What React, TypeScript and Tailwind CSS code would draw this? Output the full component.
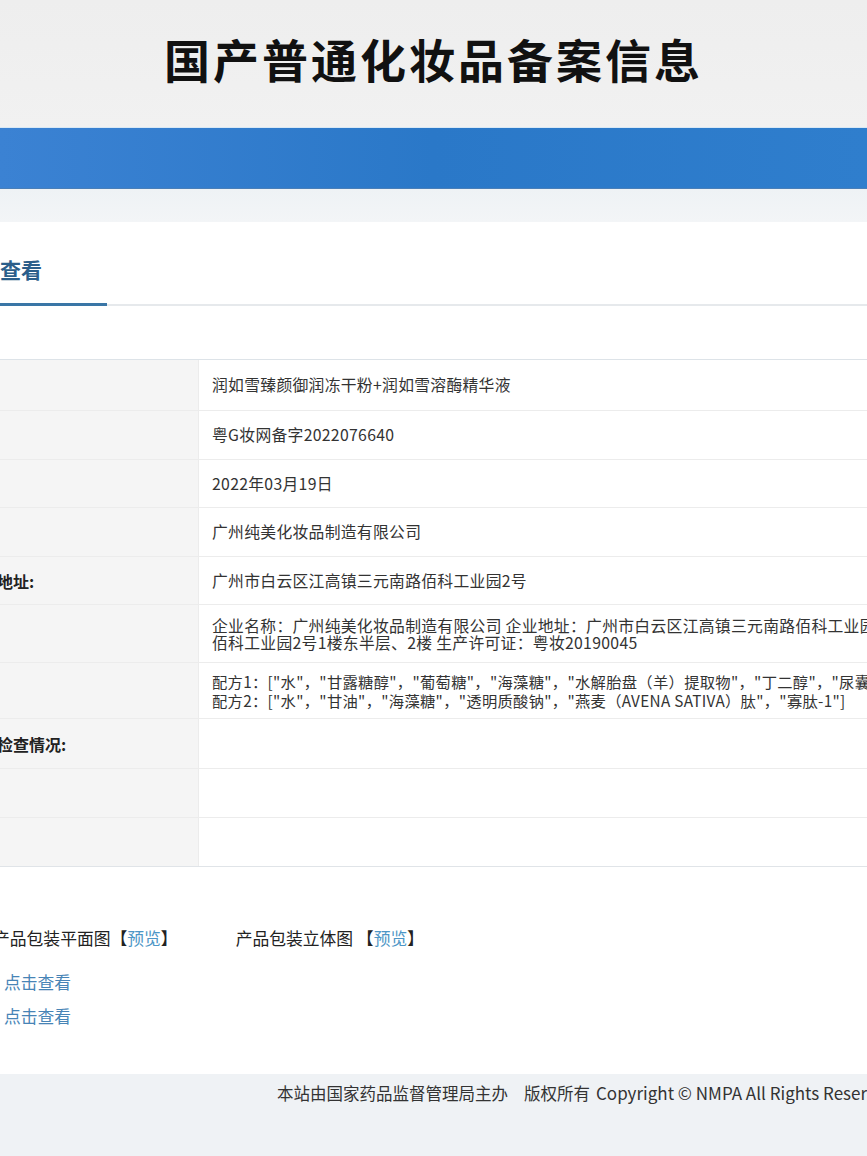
import React from 'react'

// 国产普通化妆品备案信息 详情页
const rows: { label: string; value: React.ReactNode; h: string }[] = [
  { label: '产品名称:', value: '润如雪臻颜御润冻干粉+润如雪溶酶精华液', h: 'h-[51px]' },
  { label: '备案编号:', value: '粤G妆网备字2022076640', h: 'h-[49px]' },
  { label: '备案日期:', value: '2022年03月19日', h: 'h-[48px]' },
  { label: '备案人:', value: '广州纯美化妆品制造有限公司', h: 'h-[49px]' },
  { label: '生产企业（备案人）地址:', value: '广州市白云区江高镇三元南路佰科工业园2号', h: 'h-[48px]' },
  {
    label: '生产企业信息:',
    value: (
      <div className="leading-[17px]">
        <div>企业名称：广州纯美化妆品制造有限公司 企业地址：广州市白云区江高镇三元南路佰科工业园</div>
        <div>佰科工业园2号1楼东半层、2楼 生产许可证：粤妆20190045</div>
      </div>
    ),
    h: 'h-[58px]',
  },
  {
    label: '产品配方成分:',
    value: (
      <div className="leading-[19px] text-[15.3px]">
        <div>配方1：["水"，"甘露糖醇"，"葡萄糖"，"海藻糖"，"水解胎盘（羊）提取物"，"丁二醇"，"尿囊素"]</div>
        <div>配方2：["水"，"甘油"，"海藻糖"，"透明质酸钠"，"燕麦（AVENA SATIVA）肽"，"寡肽-1"]</div>
      </div>
    ),
    h: 'h-[56px]',
  },
  { label: '产品上市后监督抽样检查情况:', value: '', h: 'h-[50px]' },
  { label: '产品执行的标准:', value: '', h: 'h-[49px]' },
  { label: '备注:', value: '', h: 'h-[48px]' },
]

export default function App() {
  return (
    <div className="w-[867px] h-[1156px] overflow-hidden bg-white font-['Noto_Sans_CJK_SC',sans-serif] text-[#333]">
      {/* 页头 */}
      <div className="h-[127px] bg-gradient-to-b from-[#eeeeee] to-[#f1f1f1] flex items-center justify-center">
        <h1 className="text-[46px] font-bold tracking-[3px] text-[#111] leading-none pb-[12px]">
          国产普通化妆品备案信息
        </h1>
      </div>
      <div className="h-[62px] border-t border-[#d8e8f5] border-b border-b-[#4a7fb8] bg-gradient-to-r from-[#3b82d3] via-[#2a78c8] to-[#2f7ecd]" />
      <div className="h-[33px] bg-gradient-to-b from-[#eef2f5] to-[#f3f5f7]" />

      {/* 内容卡片 */}
      <div className="bg-white">
        <div className="h-[84px] border-b-2 border-[#e6e9ec] flex items-end">
          <div className="ml-[-65px] w-[172px] pl-[65px] pb-[20px] border-b-[3px] border-[#3a76a6] mb-[-2px] text-[21px] font-bold leading-[28px] text-[#2b5e8a]">
            查看
          </div>
        </div>

        <div className="h-[53px]" />

        <div className="ml-[-147px] w-[1260px] border-t border-[#dde3e8] border-b border-b-[#e0e4e8]">
          {rows.map((r, i) => (
            <div key={i} className={`flex ${r.h} ${i < rows.length - 1 ? 'border-b border-[#ececec]' : ''}`}>
              <div className="w-[346px] shrink-0 bg-[#f5f5f5] border-r border-[#ececec] flex items-center text-[16px] font-bold text-[#222] whitespace-nowrap">
                {r.label}
              </div>
              <div className="flex-1 flex items-center pl-[13px] text-[15.8px] tracking-[0.3px] whitespace-nowrap text-[#333]">
                {r.value}
              </div>
            </div>
          ))}
        </div>

        {/* 包装图 */}
        <div className="h-[207px] pt-[59px] text-[16.8px] leading-[24px] text-[#222]">
          <div className="flex gap-[58px] ml-[-7px] whitespace-nowrap">
            <span>
              产品包装平面图【<span className="text-[#4d96c6]">预览</span>】
            </span>
            <span>
              产品包装立体图 【<span className="text-[#4d96c6]">预览</span>】
            </span>
          </div>
          <div className="ml-[4px] mt-[20px] text-[#4784b6]">点击查看</div>
          <div className="ml-[4px] mt-[10px] text-[#4784b6]">点击查看</div>
        </div>
      </div>

      {/* 页脚 */}
      <div className="h-[83px] bg-[#eff2f5] pt-[7px] pl-[277px] whitespace-nowrap text-[16.5px] leading-[24px] text-[#333]">
        本站由国家药品监督管理局主办
        <span className="ml-[16px]">版权所有</span>
        <span className="ml-[6px] text-[17px]">Copyright © NMPA All Rights Reserved</span>
      </div>
    </div>
  )
}
